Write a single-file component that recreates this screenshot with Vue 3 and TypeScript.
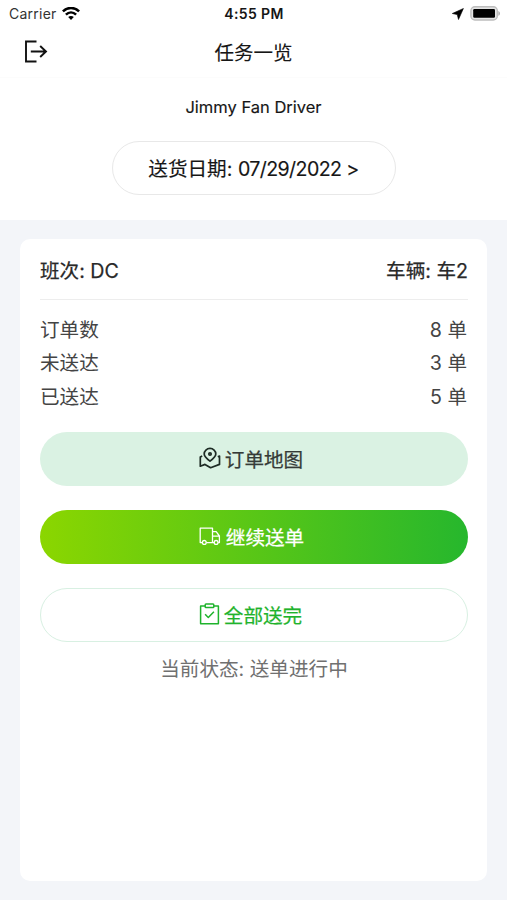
<script setup lang="ts">
interface Stat {
  label: string
  count: number
}

const driver = 'Jimmy Fan Driver'
const deliveryDate = '07/29/2022'
const stats: Stat[] = [
  { label: '订单数', count: 8 },
  { label: '未送达', count: 3 },
  { label: '已送达', count: 5 },
]
</script>

<template>
  <div class="screen">
    <div class="status-bar">
      <div class="carrier">
        <span>Carrier</span>
        <svg class="wifi" width="18" height="14" viewBox="0 0 18 14" fill="none" stroke="#000" stroke-width="2.5">
          <path d="M0.9 4.400C5.500 -0.200 12.500 -0.200 17.100 4.400" />
          <path d="M3.900 7.600C6.900 4.700 11.100 4.700 14.100 7.600" />
          <path d="M9 12.900L6.200 10.100C7.800 8.700 10.200 8.700 11.800 10.100Z" fill="#000" stroke="none" />
        </svg>
      </div>
      <span class="clock">4:55 PM</span>
      <div class="indicators">
        <svg width="12" height="12" viewBox="0 0 12 12"><path d="M11.400 0.500L0.300 5.500L5.200 6.600L6.500 11.500Z" fill="#000" stroke="#000" stroke-width="0.600" /></svg>
        <svg class="battery" width="31" height="15" viewBox="0 0 31 15">
          <rect x="0.900" y="0.800" width="26.400" height="13.200" rx="4" fill="#e4e4e4" stroke="#bdbdbd" stroke-width="1.400" />
          <rect x="3.200" y="3" width="21.800" height="8.800" rx="1.200" fill="#000" />
          <path d="M28.300 5C30.600 5.800 30.600 9 28.300 9.800Z" fill="#b0b0b0" />
        </svg>
      </div>
    </div>

    <header class="nav">
      <svg class="exit" width="24" height="24" viewBox="0 0 24 24" fill="none" stroke="#111" stroke-width="1.900">
        <path d="M12.500 1.500H2V21.500H12.500" />
        <path d="M6.800 11.500H22M16.200 6L22 11.500L16.200 17" />
      </svg>
      <h1 class="title">任务一览</h1>
    </header>

    <section class="summary">
      <div class="driver">{{ driver }}</div>
      <button class="date" type="button">
        <span>送货日期: <span class="digits">{{ deliveryDate }} &gt;</span></span>
      </button>
    </section>

    <main class="content">
      <article class="card">
        <div class="card-head">
          <span>班次: DC</span>
          <span>车辆: 车2</span>
        </div>
        <div class="stats">
          <div v-for="s in stats" :key="s.label" class="stat">
            <span>{{ s.label }}</span>
            <span>{{ s.count }} 单</span>
          </div>
        </div>
        <div class="actions">
          <button class="btn map" type="button">
            <svg width="22" height="22" viewBox="0 0 22 22" fill="none" stroke="#1d2b24" stroke-width="1.700" stroke-linejoin="round">
              <path d="M11 14.200C7.400 11.300 5.200 9.200 5.200 6.900A5.800 5.500 0 0 1 16.800 6.900C16.800 9.200 14.600 11.300 11 14.200Z" />
              <circle cx="11" cy="7" r="1.200" />
              <path d="M3.200 9.100L1.300 10V19.200L6 17.400L11.600 20.700L20.500 17.400V9.100L18.800 9.800" />
            </svg>
            <span>订单地图</span>
          </button>
          <button class="btn go" type="button">
            <svg width="22" height="22" viewBox="0 0 22 22" fill="none" stroke="#fff" stroke-width="1.300" stroke-linejoin="round">
              <path d="M3.300 17.600H1.200V3.200H13.500V17.600H7.300M13.500 6.700H17.200L20.400 11V17.600H19.200M15.100 17.600H13.500M13.500 11.200H20.400" />
              <circle cx="5.300" cy="17.400" r="1.900" />
              <circle cx="17.100" cy="17.400" r="1.900" />
            </svg>
            <span>继续送单</span>
          </button>
          <button class="btn done" type="button">
            <svg width="22" height="22" viewBox="0 0 22 22" fill="none" stroke="#1fb32c" stroke-width="1.500" stroke-linejoin="round">
              <path d="M6.200 2.900H1.600V20.700H19.400V2.900H14.800" />
              <rect x="6.200" y="1.100" width="8.600" height="3.400" rx="0.800" />
              <path d="M6.100 11.200L9.300 14.500L14.900 8.700" />
            </svg>
            <span>全部送完</span>
          </button>
        </div>
        <p class="state">当前状态: 送单进行中</p>
      </article>
    </main>
  </div>
</template>

<style>
body {
  margin: 0;
}
</style>

<style scoped>
.screen {
  box-sizing: border-box;
  display: flex;
  flex-direction: column;
  width: 507px;
  height: 900px;
  overflow: hidden;
  background: #fff;
  color: #161616;
  font-family: Inter, 'Noto Sans CJK SC', sans-serif;
  font-size: 19.6px;
  white-space: nowrap;
}

.status-bar {
  display: grid;
  grid-template-columns: 1fr auto 1fr;
  align-items: center;
  height: 27px;
  padding: 0 6px 0 9px;
}

.carrier {
  display: flex;
  align-items: center;
  gap: 5px;
  font-size: 14px;
  letter-spacing: 0.25px;
  color: #333;
}

.clock {
  padding-right: 2px;
  font-size: 14px;
  font-weight: 600;
  letter-spacing: 0.4px;
}

.indicators {
  display: flex;
  align-items: center;
  justify-content: flex-end;
  gap: 6px;
}

.nav {
  display: grid;
  grid-template-columns: 1fr auto 1fr;
  align-items: center;
  height: 50px;
  padding: 0 24px;
  border-bottom: 1px solid #fcfcfc;
}

.title {
  margin: 0;
  padding-top: 1px;
  font-size: 19.5px;
  font-weight: 400;
  line-height: 30px;
  -webkit-text-stroke: 0.1px;
}

.summary {
  display: flex;
  flex-direction: column;
  align-items: center;
  height: 142px;
}

.driver {
  margin-top: 17px;
  font-size: 16.5px;
  line-height: 24px;
  -webkit-text-stroke: 0.15px;
}

button {
  display: flex;
  align-items: center;
  justify-content: center;
  box-sizing: border-box;
  height: 54px;
  padding: 0;
  border: 1px solid transparent;
  border-radius: 27px;
  background: none;
  color: inherit;
  font: inherit;
}

.date {
  width: 284px;
  margin-top: 22px;
  padding-bottom: 2px;
  border-color: #e8e8e8;
  -webkit-text-stroke: 0.15px;
}

.digits {
  letter-spacing: -0.6px;
}

.content {
  box-sizing: border-box;
  flex: 1;
  padding: 19px 20px;
  background: #f3f5f9;
}

.card {
  box-sizing: border-box;
  height: 642px;
  padding: 0 19px 0 20px;
  border-radius: 10px;
  background: #fff;
}

.card-head {
  display: flex;
  align-items: center;
  justify-content: space-between;
  box-sizing: border-box;
  height: 61px;
  padding-top: 1px;
  border-bottom: 1px solid #ededed;
  color: #292929;
  -webkit-text-stroke: 0.25px;
}

.stats {
  padding-top: 13.5px;
  color: #444;
}

.stat {
  display: flex;
  justify-content: space-between;
  line-height: 33.5px;
}

.stat span:last-child {
  padding-right: 1px;
}

.actions {
  display: grid;
  gap: 24px;
  margin-top: 18px;
}

.btn {
  gap: 4px;
  width: 428px;
  padding: 0 6px 2px 0;
  -webkit-text-stroke: 0.25px;
}

.map {
  background: #daf2e3;
  color: #353b37;
}

.go {
  border: 0;
  gap: 5px;
  padding-right: 5px;
  background: linear-gradient(90deg, #8bd600, #26b72d);
  color: #fff;
}

.done {
  gap: 3px;
  padding-right: 7px;
  border-color: #d8f0e2;
  color: #1fb32c;
}

.state {
  margin: 12px 0 0;
  text-align: center;
  line-height: 30px;
  color: #707070;
}
</style>
